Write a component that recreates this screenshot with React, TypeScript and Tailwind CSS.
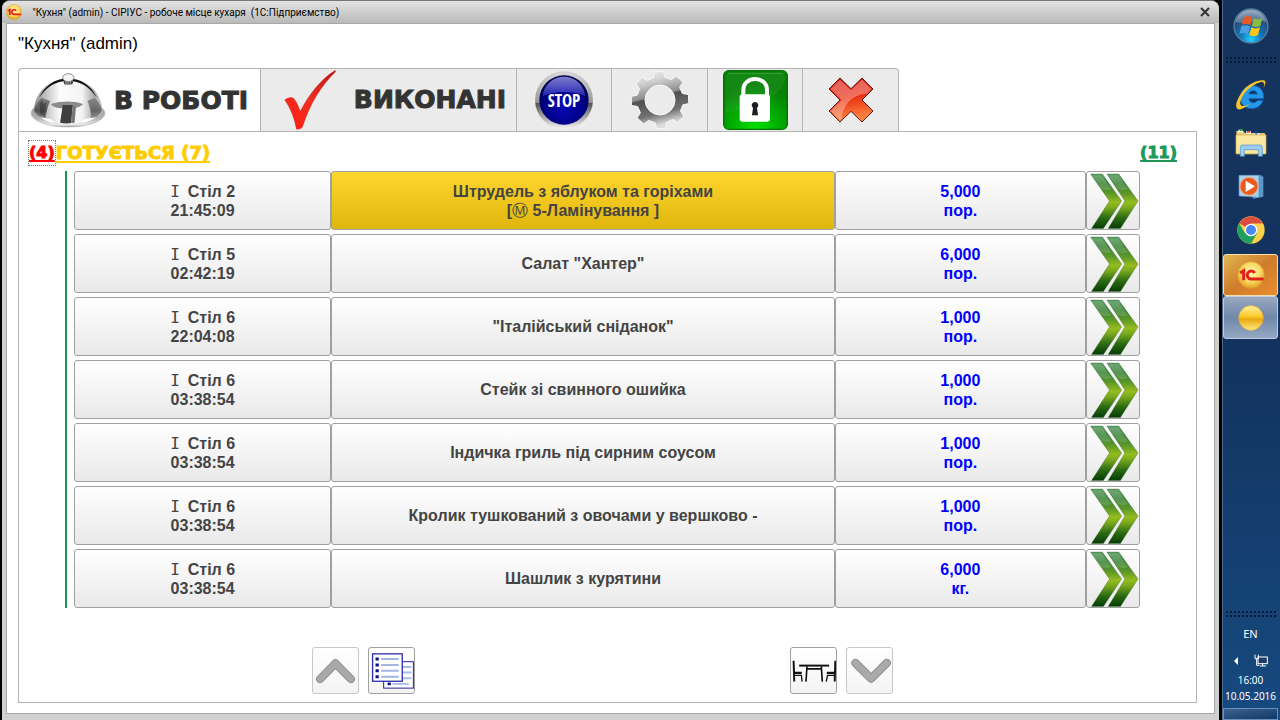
import React, { useState } from "react";

type Order = {
  id: number;
  table: string;
  time: string;
  dish: string;
  note?: string;
  amount: string;
  unit: string;
};

const orders: Order[] = [
  { id: 1, table: "Стіл 2", time: "21:45:09", dish: "Штрудель з яблуком та горіхами", note: "5-Ламінування ]", amount: "5,000", unit: "пор." },
  { id: 2, table: "Стіл 5", time: "02:42:19", dish: 'Салат "Хантер"', amount: "6,000", unit: "пор." },
  { id: 3, table: "Стіл 6", time: "22:04:08", dish: '"Італійський сніданок"', amount: "1,000", unit: "пор." },
  { id: 4, table: "Стіл 6", time: "03:38:54", dish: "Стейк зі свинного ошийка", amount: "1,000", unit: "пор." },
  { id: 5, table: "Стіл 6", time: "03:38:54", dish: "Індичка гриль під сирним соусом", amount: "1,000", unit: "пор." },
  { id: 6, table: "Стіл 6", time: "03:38:54", dish: "Кролик тушкований з овочами у вершково -", amount: "1,000", unit: "пор." },
  { id: 7, table: "Стіл 6", time: "03:38:54", dish: "Шашлик з курятини", amount: "6,000", unit: "кг." },
];

// 8 teeth, outer radius 87, root radius 68
const gearPath = (() => {
  const pts: string[] = [];
  for (let i = 0; i < 8; i++) {
    const steps = [
      [-14, 70],
      [-9, 87],
      [9, 87],
      [14, 70],
    ];
    steps.forEach(([deg, r]) => {
      const a = ((i * 45 + deg - 2) * Math.PI) / 180;
      pts.push(`${(90 + r * Math.sin(a)).toFixed(1)} ${(90 - r * Math.cos(a)).toFixed(1)}`);
    });
  }
  return `M${pts.join("L")}Z M45 90a45 45 0 1 0 90 0a45 45 0 1 0 -90 0Z`;
})();

const ClocheIcon = () => (
  <svg viewBox="0 0 228 170" className="h-14 w-[76px]" aria-hidden="true">
    <defs>
      <linearGradient id="dome" x1="0" x2="1" y1="0" y2="0">
        <stop offset="0" stopColor="#8a8a8a" />
        <stop offset="0.2" stopColor="#c8c8c8" />
        <stop offset="0.38" stopColor="#fcfcfc" />
        <stop offset="0.7" stopColor="#f4f4f4" />
        <stop offset="0.86" stopColor="#b0b0b0" />
        <stop offset="1" stopColor="#c8c8c8" />
      </linearGradient>
      <linearGradient id="domeSide" x1="0" x2="0" y1="0" y2="1">
        <stop offset="0" stopColor="#777" />
        <stop offset="0.6" stopColor="#444" />
        <stop offset="1" stopColor="#888" />
      </linearGradient>
      <linearGradient id="rim" x1="0" x2="0" y1="0" y2="1">
        <stop offset="0" stopColor="#888" />
        <stop offset="0.7" stopColor="#b4b4b4" />
        <stop offset="0.92" stopColor="#eee" />
        <stop offset="1" stopColor="#8c8c8c" />
      </linearGradient>
    </defs>
    <ellipse cx="114" cy="122" rx="112" ry="42" fill="url(#rim)" stroke="#b4b4b4" strokeWidth="2" />
    <path d="M9 114C17 58 50 18 114 18s98 40 106 96c-10 26-54 40-106 40S19 140 9 114Z" fill="url(#dome)" />
    <path d="M26 76C44 38 74 17 114 17s70 21 88 59C180 42 152 24 114 24S48 42 26 76Z" fill="#111" />
    <path d="M12 112c4-15 12-28 22-37l26 10c-8 16-12 34-14 56-16-6-30-16-34-29Z" fill="url(#domeSide)" opacity=".85" />
    <path d="M28 94l6-14 6 14 8-6-5 44-14-8Z" fill="#1c1c1c" opacity=".4" />
    <path d="M217 112c-4-15-12-28-22-37l-22 10c8 16 11 36 11 56 16-7 30-16 33-29Z" fill="url(#domeSide)" opacity=".7" />
    <path d="M62 94c30-10 70-10 98 0-8 9-22 13-34 13H96c-14 0-28-4-34-13Z" fill="#8c8c8c" />
    <path d="M98 97h30l-4 55c-12 2-24 1-34-1Z" fill="#404040" />
    <path d="M128 99l10 6-4 46-10 1Z" fill="#777" />
    <path d="M30 134l32 6 12 12c-18-3-34-9-44-18ZM200 134l-36 6-12 12c18-3 36-9 48-18Z" fill="#fff" />
    <rect x="101" y="21" width="28" height="14" rx="6" fill="#3c3c3c" />
    <path d="M108 24v9M114 24v9M121 24v9" stroke="#bbb" strokeWidth="3" />
    <ellipse cx="115" cy="14" rx="17" ry="12" fill="#f6f6f6" stroke="#8a8a8a" strokeWidth="3" />
  </svg>
);

const CheckIcon = () => (
  <svg viewBox="0 0 165 180" className="h-15 w-[55px]" aria-hidden="true">
    <defs>
      <linearGradient id="tick" x1="1" x2="0" y1="0" y2="1">
        <stop offset="0" stopColor="#c01010" />
        <stop offset="0.5" stopColor="#f03020" />
        <stop offset="1" stopColor="#ff1c10" />
      </linearGradient>
    </defs>
    <path d="M5 90c8-8 22-10 28-4 8 10 13 22 19 38C75 78 112 28 155 2c2-1 4 1 2 4-44 43-75 94-99 166-6 6-14 7-18 5C36 150 22 112 5 90Z" fill="url(#tick)" stroke="#b82018" strokeWidth="1" />
  </svg>
);

const StopIcon = () => (
  <svg viewBox="0 0 180 180" className="size-15" aria-hidden="true">
    <defs>
      <radialGradient id="ball" cx=".5" cy=".65" r=".6">
        <stop offset="0" stopColor="#0808b8" />
        <stop offset="0.7" stopColor="#000080" />
        <stop offset="1" stopColor="#000048" />
      </radialGradient>
      <linearGradient id="shine" x1="0" x2="0" y1="0" y2="1">
        <stop offset="0" stopColor="#a8a8f4" />
        <stop offset="1" stopColor="#3030c0" />
      </linearGradient>
      <linearGradient id="ring" x1="0" x2="0" y1="0" y2="1">
        <stop offset="0" stopColor="#d8d8d8" />
        <stop offset="0.54" stopColor="#999" />
        <stop offset="0.56" stopColor="#555" />
        <stop offset="0.8" stopColor="#aaa" />
        <stop offset="1" stopColor="#f4f4f4" />
      </linearGradient>
    </defs>
    <circle cx="90" cy="90" r="87" fill="url(#ring)" />
    <circle cx="90" cy="90" r="74" fill="url(#ball)" />
    <path d="M26 78c4-36 32-58 64-58s60 22 64 58c-36-16-92-16-128 0Z" fill="url(#shine)" opacity=".75" />
    <text x="90" y="110" textAnchor="middle" fontSize="51" fontWeight="700" fill="#fff" className="font-['Open_Sans_Condensed','Roboto_Condensed','DejaVu_Sans_Condensed',sans-serif]">
      STOP
    </text>
  </svg>
);

const GearIcon = () => (
  <svg viewBox="0 0 180 180" className="size-15" aria-hidden="true">
    <defs>
      <linearGradient id="gear" x1="0" x2=".25" y1="0" y2="1">
        <stop offset="0" stopColor="#fafafa" />
        <stop offset="0.25" stopColor="#d0d0d0" />
        <stop offset="0.5" stopColor="#8c8c8c" />
        <stop offset="0.53" stopColor="#505050" />
        <stop offset="0.8" stopColor="#707070" />
        <stop offset="1" stopColor="#ddd" />
      </linearGradient>
    </defs>
    <path d={gearPath} fill="url(#gear)" fillRule="evenodd" stroke="#f8f8f8" strokeWidth="3" strokeLinejoin="round" />
  </svg>
);

const LockIcon = () => (
  <svg viewBox="0 0 195 180" className="h-15 w-[65px]" aria-hidden="true">
    <defs>
      <radialGradient id="green" cx=".5" cy="1" r=".75">
        <stop offset="0" stopColor="#00e400" />
        <stop offset="0.45" stopColor="#00b400" />
        <stop offset="0.8" stopColor="#069006" />
        <stop offset="1" stopColor="#078007" />
      </radialGradient>
    </defs>
    <rect x="2" y="2" width="191" height="176" rx="15" fill="url(#green)" stroke="#087008" strokeWidth="4" />
    <path d="M8 24Q8 8 24 8h148q15 0 15 14C180 80 90 120 8 128Z" fill="#fff" opacity=".06" />
    <path d="M14 10h166" stroke="#4cb04c" strokeWidth="2" />
    <path d="M61 78V60c0-44 71-44 71 0v18" fill="none" stroke="#fff" strokeWidth="12" />
    <rect x="50" y="73" width="91" height="82" rx="9" fill="#fff" />
    <path d="M96 96a10 10 0 0 1 6 18l3 22H87l3-22a10 10 0 0 1 6-18Z" fill="#1c1c28" />
  </svg>
);

const CrossIcon = () => (
  <svg viewBox="0 0 138 138" className="size-[46px]" aria-hidden="true">
    <defs>
      <linearGradient id="cross" x1="0" x2=".2" y1="0" y2="1">
        <stop offset="0" stopColor="#d81010" />
        <stop offset="0.5" stopColor="#e82c10" />
        <stop offset="1" stopColor="#ff8440" />
      </linearGradient>
    </defs>
    <path d="M36 3l33 32 33-32 33 33-33 33 33 33-33 33-33-32-33 32L3 102l33-33L3 36Z" fill="url(#cross)" stroke="#5a1c18" strokeWidth="3" />
    <path d="M36 8l33 32 33-32 28 28-14 14C82 52 48 72 40 126l-4 4-28-28 33-33L8 36Z" fill="#fff" opacity=".32" />
  </svg>
);

const NextIcon = () => (
  <svg viewBox="0 0 162 177" className="h-full w-full" aria-hidden="true">
    <defs>
      <linearGradient id="arrow" x1="0" x2="0" y1="0" y2="1">
        <stop offset="0" stopColor="#5c9c64" />
        <stop offset="0.18" stopColor="#3c8438" />
        <stop offset="0.35" stopColor="#5a9628" />
        <stop offset="0.52" stopColor="#94bc1c" />
        <stop offset="0.62" stopColor="#78a81c" />
        <stop offset="0.8" stopColor="#2c6c14" />
        <stop offset="1" stopColor="#043c04" />
      </linearGradient>
    </defs>
    <g fill="url(#arrow)" stroke="#2c5c24" strokeWidth="1">
      <path d="M11 6h37l60 84-57 86H14l56-86Z" />
      <path d="M62 6h37l60 84-55 86H66l52-86Z" />
    </g>
    <path d="M15 10h31l30 43c-14 6-24 2-32-2ZM66 10h31l30 43c-14 6-24 2-32-2Z" fill="#fff" opacity=".14" />
  </svg>
);

const ChevronIcon = ({ down }: { down?: boolean }) => (
  <svg viewBox="0 0 138 138" className="size-full" aria-hidden="true">
    <path
      d={down ? "M26 46l48 48 48-48" : "M22 95l47-48 47 48"}
      fill="none"
      stroke="#888"
      strokeWidth="25"
      strokeLinecap="round"
      strokeLinejoin="round"
    />
    <path
      d={down ? "M26 46l48 48 48-48" : "M22 95l47-48 47 48"}
      fill="none"
      stroke="#a9a9a9"
      strokeWidth="20"
      strokeLinecap="round"
      strokeLinejoin="round"
    />
  </svg>
);

const ListIcon = () => (
  <svg viewBox="0 0 138 138" className="size-full" aria-hidden="true">
    <rect x="45" y="42" width="91" height="81" fill="#fff" stroke="#1c1c9c" strokeWidth="3" />
    <path d="M72 110h50M100 58h30M100 75h30M100 93h30" stroke="#a8bce8" strokeWidth="6" />
    <path d="M57 110h10" stroke="#10108c" strokeWidth="8" />
    <rect x="11" y="18" width="91" height="84" fill="#fff" stroke="#2c2cb0" strokeWidth="4" />
    <path d="M37 34h54M37 52h54M37 70h54M37 88h54" stroke="#a4b4e4" strokeWidth="6" />
    <path d="M20 34h10M20 52h10M20 70h10M20 88h10" stroke="#10108c" strokeWidth="9" />
  </svg>
);

const TableIcon = () => (
  <svg viewBox="0 0 138 138" className="size-full" aria-hidden="true">
    <g fill="none" stroke="#111">
      <path d="M25 54h92" strokeWidth="6" />
      <path d="M49 56l-3 47M93 56l3 47M50 64h42" strokeWidth="5" />
      <path d="M8 39l2 64M136 39l-2 64" strokeWidth="6" />
      <path d="M9 76h24M135 76h-25" strokeWidth="7" />
      <path d="M11 84h21l2 19M133 84h-21l-4 19" strokeWidth="4" />
    </g>
  </svg>
);

const OneCBall = ({ label, className }: { label?: boolean; className: string }) => (
  <svg viewBox="0 0 84 84" className={className} aria-hidden="true">
    <defs>
      <radialGradient id="gold" cx=".5" cy=".4" r=".6">
        <stop offset="0" stopColor="#fff8b0" />
        <stop offset="0.6" stopColor="#fbd860" />
        <stop offset="1" stopColor="#e0a020" />
      </radialGradient>
      <linearGradient id="goldPlain" x1="0" x2="0" y1="0" y2="1">
        <stop offset="0" stopColor="#fff0a0" />
        <stop offset="0.45" stopColor="#f8c828" />
        <stop offset="0.55" stopColor="#e8a810" />
        <stop offset="1" stopColor="#ffec80" />
      </linearGradient>
    </defs>
    <circle cx="42" cy="42" r="40" fill={label ? "url(#gold)" : "url(#goldPlain)"} stroke="#d8a030" strokeWidth="2" />
    {label && (
      <g fill="none" stroke="#e0201c" strokeWidth="9">
        <path d="M9 36l11-7v29" />
        <path d="M53 36a12 12 0 1 0-11 18h38" />
      </g>
    )}
  </svg>
);

const WindowsIcon = () => (
  <svg viewBox="0 0 108 108" className="size-9" aria-hidden="true">
    <defs>
      <radialGradient id="orb" cx=".5" cy=".9" r=".85">
        <stop offset="0" stopColor="#20d0ff" />
        <stop offset="0.4" stopColor="#1070b8" />
        <stop offset="0.75" stopColor="#28507c" />
        <stop offset="1" stopColor="#7890a8" />
      </radialGradient>
    </defs>
    <circle cx="54" cy="54" r="51" fill="url(#orb)" stroke="#587c9c" strokeWidth="4" />
    <path d="M8 42C16 16 34 6 54 6s38 10 46 36C72 30 36 50 8 42Z" fill="#fff" opacity=".25" />
    <path d="M32 28c9-5 18-4 26 0l-6 24c-8-5-17-5-26-1Z" fill="#e85820" />
    <path d="M62 31c9 4 17 4 26-1l-6 24c-9 4-17 4-26 0Z" fill="#88bc40" />
    <path d="M25 55c9-4 18-4 26 1l-6 23c-8-5-17-5-26-1Z" fill="#48a0e0" />
    <path d="M55 58c9 5 17 4 26 0l-6 23c-9 5-18 4-26 1Z" fill="#fcc818" />
  </svg>
);

const IeIcon = () => (
  <svg viewBox="0 0 96 96" className="size-8" aria-hidden="true">
    <path d="M86 56H42c1 14 20 15 26 5h16C74 98 16 92 16 54c0-48 74-52 70 2ZM42 42h25c-2-13-23-13-25 0Z" fill="#2498e8" stroke="#1060b0" strokeWidth="3" />
    <path d="M26 30c-20 24-30 54-16 58 8 2 22-6 34-16-12 6-22 8-26 4-8-8 6-36 26-52C64 8 82 2 86 8c3 4 2 10-1 18 9-16 8-26-1-25C66 0 42 12 26 30Z" fill="#f8c428" />
  </svg>
);

const FolderIcon = () => (
  <svg viewBox="0 0 96 88" className="h-[30px] w-8" aria-hidden="true">
    <path d="M4 8h20l6 6h56q6 0 6 6v58H4Z" fill="#e8c870" />
    <path d="M10 4h14v8H10ZM34 8h14v8H34ZM58 14h14v8H58Z" fill="#fff" />
    <path d="M14 3h10v5H14Z" fill="#30a030" />
    <path d="M36 8h10v5H36Z" fill="#e04020" />
    <path d="M60 13h8v6h-8Z" fill="#3090e0" />
    <path d="M3 20h90v56H3Z" fill="#fbe8a0" stroke="#d8b050" strokeWidth="2" />
    <path d="M16 84V56q0-6 6-6h54q6 0 6 6v28H70V64H28v20Z" fill="#9cccf0" stroke="#4c90c8" strokeWidth="2" />
  </svg>
);

const PlayerIcon = () => (
  <svg viewBox="0 0 78 78" className="size-[26px]" aria-hidden="true">
    <path d="M10 4h60l6 6v58l-30 6Z" fill="#5c98c8" />
    <path d="M3 4h60v66L3 66Z" fill="#a8d0f0" stroke="#5890c0" strokeWidth="2" />
    <circle cx="33" cy="37" r="27" fill="#e85c20" stroke="#fca878" strokeWidth="3" />
    <path d="M23 20l28 17-28 17Z" fill="#fff" />
  </svg>
);

const ChromeIcon = () => (
  <svg viewBox="0 0 84 84" className="size-7" aria-hidden="true">
    <circle cx="42" cy="42" r="41" fill="#fcd048" />
    <path d="M42 42L6.500 21.500A41 41 0 0 1 77.500 22.500H42Z" fill="#dc4c40" />
    <path d="M6.500 21.500A41 41 0 0 0 42 83L60 52 42 42 24 52Z" fill="#20a060" />
    <circle cx="42" cy="42" r="19" fill="#fff" />
    <circle cx="42" cy="42" r="15" fill="#4888f4" />
  </svg>
);

const NetworkIcon = () => (
  <svg viewBox="0 0 42 42" className="size-3.5" aria-hidden="true">
    <rect x="12" y="9" width="28" height="20" fill="#1c3c68" stroke="#fff" strokeWidth="3" />
    <path d="M3 2v12h10V2M8 14v20h8M18 36h18M26 30v6" fill="none" stroke="#fff" strokeWidth="3" />
  </svg>
);

const Grip = () => (
  <div className="h-2 w-13 bg-[radial-gradient(#061a3c_1px,transparent_1px)] bg-[size:4px_4px]" />
);

const tabBase = "flex h-16 items-center border-y border-r border-[#b4b4b4]";
const tabText =
  "font-['DejaVu_Sans',Verdana,sans-serif] text-[25px] font-bold text-[#333] [-webkit-text-stroke:1px]";
const cellBase =
  "flex flex-col items-center justify-center rounded-[3px] border border-[#a0a0a0] leading-[19px]";
const plain = "bg-linear-to-b from-white to-[#e9e9e9]";
const toolButton =
  "size-[47px] rounded-[3px] border bg-linear-to-b from-white to-[#f4f4f4]";

function OrderRow({
  order,
  selected,
  onSelect,
}: {
  order: Order;
  selected: boolean;
  onSelect: () => void;
}) {
  return (
    <div className="grid h-[59px] grid-cols-[257fr_503fr_251fr_54px]">
      <button className={`${cellBase} ${plain}`} onClick={onSelect}>
        <span>
          <span className="mr-2 font-['DejaVu_Sans_Mono',monospace] font-normal">I</span>
          {order.table}
        </span>
        <span>{order.time}</span>
      </button>
      <button
        className={`${cellBase} ${selected ? "bg-linear-to-b from-[#ffd62c] to-[#e0b60c]" : plain}`}
        onClick={onSelect}
      >
        <span>{order.dish}</span>
        {order.note && (
          <span>
            [<span className="font-['DejaVu_Sans',sans-serif] font-normal">Ⓜ</span> {order.note}
          </span>
        )}
      </button>
      <button className={`${cellBase} ${plain} text-[#00f]`} onClick={onSelect}>
        <span>{order.amount}</span>
        <span>{order.unit}</span>
      </button>
      <button className={`overflow-hidden rounded-[3px] border border-[#a0a0a0] ${plain}`} aria-label="Далі">
        <NextIcon />
      </button>
    </div>
  );
}

function Taskbar() {
  return (
    <aside className="flex w-[58px] shrink-0 flex-col items-center border-l border-[#4c6c90] bg-linear-to-b from-[#15335c] via-[#12335f] to-[#164a80] pr-0.5 font-['Noto_Sans',sans-serif] text-[11px] text-white">
      <button className="mt-2" aria-label="Пуск">
        <WindowsIcon />
      </button>
      <div className="mt-3">
        <Grip />
      </div>
      <nav className="mt-4 flex w-full flex-col items-center gap-4">
        <button aria-label="Internet Explorer">
          <IeIcon />
        </button>
        <button aria-label="Провідник">
          <FolderIcon />
        </button>
        <button aria-label="Програвач">
          <PlayerIcon />
        </button>
        <button aria-label="Chrome">
          <ChromeIcon />
        </button>
      </nav>
      <button
        className="mt-2.5 flex h-[42px] w-full items-center justify-center rounded-[3px] border border-[#f8e0a8] bg-linear-to-br from-[#e0b850] via-[#d07c2c] to-[#e88c30]"
        aria-label="1С:Підприємство"
      >
        <OneCBall label className="size-7" />
      </button>
      <button
        className="flex h-[43px] w-full items-center justify-center rounded-[3px] border border-[#c0cce0] bg-linear-to-b from-[#98a8c0] via-[#7088a8] to-[#94a8c4]"
        aria-label="1С"
      >
        <OneCBall className="size-[26px]" />
      </button>
      <div className="mt-auto flex w-full flex-col items-center">
        <Grip />
        <span className="mt-2 leading-4">EN</span>
        <div className="mt-3 flex items-center gap-4">
          <span className="h-0 w-0 border-y-4 border-r-4 border-y-transparent border-r-white" />
          <NetworkIcon />
        </div>
        <span className="mt-1 text-[10px] leading-4">16:00</span>
        <span className="text-[10px] leading-4">10.05.2016</span>
        <button
          className="mt-1 h-3 w-full border border-[#6c90b8] bg-linear-to-br from-[#3c6490] to-[#103868]"
          aria-label="Робочий стіл"
        />
      </div>
    </aside>
  );
}

export default function App() {
  const [selectedId, setSelectedId] = useState(1);

  return (
    <div className="flex min-h-screen gap-[3px] bg-black pl-0.5 font-['Liberation_Sans',Arial,sans-serif] text-black">
      <main className="flex flex-1 flex-col rounded-t-lg border-t border-[#777] bg-[#cfd1d0] px-1 pb-1.5">
        <header className="-mx-1 flex h-[22px] items-center rounded-t-lg bg-linear-to-b from-[#e4e4e4] to-[#b9b9b9] pr-2 pl-1">
          <OneCBall label className="size-4" />
          <h1 className="ml-2 font-['Roboto',sans-serif] text-[10px] whitespace-pre">
            {' "Кухня" (admin) - СІРІУС - робоче місце кухаря  (1С:Підприємство)'}
          </h1>
          <button className="ml-auto" aria-label="Закрити">
            <svg viewBox="0 0 12 12" className="size-3" aria-hidden="true">
              <path d="M2 2l8 8M10 2l-8 8" stroke="#333" strokeWidth="2" />
            </svg>
          </button>
        </header>

        <div className="flex flex-1 flex-col border border-[#a8a8a8] bg-white pr-[17px] pb-2.5 pl-[11px]">
          <p className="mt-2.5 text-[17px] leading-5">"Кухня" (admin)</p>

          <div className="mt-3.5 -mb-px flex">
            <button className="flex h-16 w-[243px] items-center gap-2 rounded-tl border border-b-0 border-[#b4b4b4] bg-white pl-[11px]">
              <ClocheIcon />
              <span className={tabText}>В РОБОТІ</span>
            </button>
            <button className={`${tabBase} w-64 justify-between bg-[#ebebeb] pr-2.5 pl-[22px]`}>
              <CheckIcon />
              <span className={tabText}>ВИКОНАНІ</span>
            </button>
            <button className={`${tabBase} w-[95px] justify-center bg-[#ebebeb]`} aria-label="Стоп">
              <StopIcon />
            </button>
            <button className={`${tabBase} w-24 justify-center bg-[#ebebeb]`} aria-label="Налаштування">
              <GearIcon />
            </button>
            <button className={`${tabBase} w-[95px] justify-center bg-[#ebebeb]`} aria-label="Заблокувати">
              <LockIcon />
            </button>
            <button className={`${tabBase} w-24 justify-center rounded-tr bg-[#ebebeb]`} aria-label="Закрити">
              <CrossIcon />
            </button>
          </div>

          <section className="flex flex-1 flex-col border border-[#b4b4b4] pb-2">
            <div className="mt-2 flex h-[26px] items-center pr-[19px] pl-[9px] font-['DejaVu_Sans',Verdana,sans-serif] font-bold decoration-2 underline-offset-2 [-webkit-text-stroke:1px]">
              <a href="#late" className="border border-dotted border-[#777] leading-6 text-[#f00] underline">
                (4)
              </a>
              <a href="#cooking" className="text-lg text-[#fc0] underline">
                ГОТУЄТЬСЯ (7)
              </a>
              <a href="#all" className="ml-auto text-[#20985c] underline">
                (11)
              </a>
            </div>

            <div className="mt-[5px] mr-14 ml-[46px] flex flex-col gap-1 border-l-2 border-[#18984c] pl-[7px] font-bold text-[#444]">
              {orders.map((order) => (
                <OrderRow
                  key={order.id}
                  order={order}
                  selected={order.id === selectedId}
                  onSelect={() => setSelectedId(order.id)}
                />
              ))}
            </div>

            <div className="mt-auto flex justify-between pr-[303px] pl-[293px]">
              <div className="flex gap-[9px]">
                <button className={`${toolButton} border-[#c8c8c8]`} aria-label="Вгору">
                  <ChevronIcon />
                </button>
                <button className={`${toolButton} border-[#a0a0a0]`} aria-label="Список">
                  <ListIcon />
                </button>
              </div>
              <div className="flex gap-[9px]">
                <button className={`${toolButton} border-[#a0a0a0]`} aria-label="Столи">
                  <TableIcon />
                </button>
                <button className={`${toolButton} border-[#c8c8c8]`} aria-label="Вниз">
                  <ChevronIcon down />
                </button>
              </div>
            </div>
          </section>
        </div>
      </main>
      <Taskbar />
    </div>
  );
}
